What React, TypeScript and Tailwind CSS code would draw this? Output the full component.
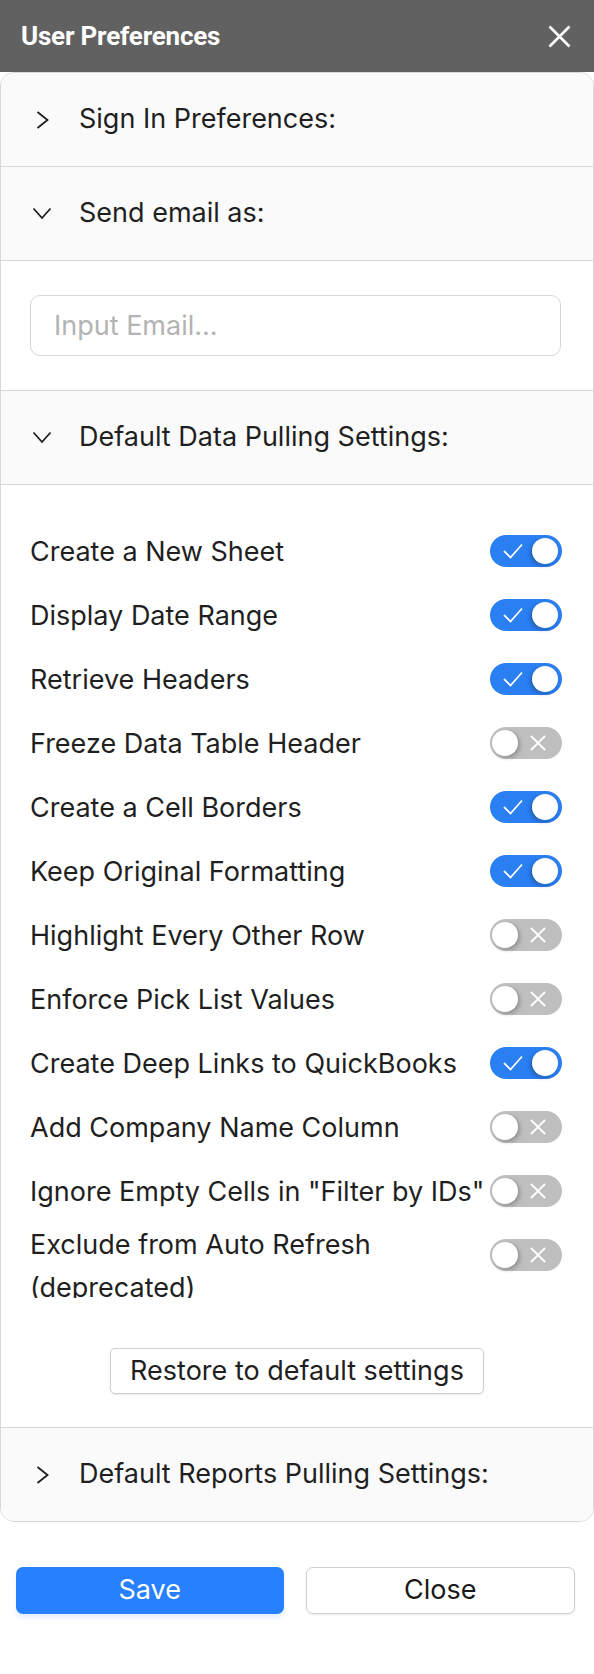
import { useState } from "react";

type Setting = {
  label: string;
  on: boolean;
  wrap?: boolean;
};

const initialSettings: Setting[] = [
  { label: "Create a New Sheet", on: true },
  { label: "Display Date Range", on: true },
  { label: "Retrieve Headers", on: true },
  { label: "Freeze Data Table Header", on: false },
  { label: "Create a Cell Borders", on: true },
  { label: "Keep Original Formatting", on: true },
  { label: "Highlight Every Other Row", on: false },
  { label: "Enforce Pick List Values", on: false },
  { label: "Create Deep Links to QuickBooks", on: true },
  { label: "Add Company Name Column", on: false },
  { label: 'Ignore Empty Cells in "Filter by IDs"', on: false },
  { label: "Exclude from Auto Refresh (deprecated)", on: false, wrap: true },
];

function Chevron({ open }: { open: boolean }) {
  return (
    <div className="flex h-5 w-5 items-center justify-center">
      {open ? (
        <svg width="20" height="13" viewBox="0 0 20 13" fill="none">
          <polyline points="1.5,1.5 10,11 18.5,1.5" stroke="#1f1f1f" strokeWidth="1.8" />
        </svg>
      ) : (
        <svg width="13" height="18" viewBox="0 0 13 18" fill="none">
          <polyline points="1.5,1 11.5,9 1.5,17" stroke="#1f1f1f" strokeWidth="1.8" />
        </svg>
      )}
    </div>
  );
}

function SectionHeader({ title, open }: { title: string; open: boolean }) {
  return (
    <div className="flex h-[93px] items-center gap-[27px] bg-[#fafafa] pl-[31px]">
      <Chevron open={open} />
      <span className="text-[27px] text-[#1f1f1f]">{title}</span>
    </div>
  );
}

function Toggle({ on, onClick }: { on: boolean; onClick: () => void }) {
  if (on) {
    return (
      <button
        onClick={onClick}
        className="flex h-8 w-[72px] shrink-0 items-center justify-between rounded-full bg-[#2a7ff3] pl-[13px] pr-[4px]"
      >
        <svg width="20" height="16" viewBox="0 0 20 16" fill="none">
          <polyline points="1,8 7.5,14.5 19,1.5" stroke="white" strokeWidth="1.8" />
        </svg>
        <span className="h-[26px] w-[26px] rounded-full bg-white shadow-[-2px_2px_4px_rgba(0,0,0,0.25)]" />
      </button>
    );
  }
  return (
    <button
      onClick={onClick}
      className="flex h-8 w-[72px] shrink-0 items-center justify-between rounded-full bg-[#bfbfbf] pl-[2px] pr-[16px]"
    >
      <span className="h-[26px] w-[26px] rounded-full bg-white shadow-[2px_2px_4px_rgba(0,0,0,0.25)]" />
      <svg width="16" height="16" viewBox="0 0 16 16" fill="none">
        <path d="M1 1L15 15M15 1L1 15" stroke="white" strokeWidth="1.8" />
      </svg>
    </button>
  );
}

export default function App() {
  const [settings, setSettings] = useState(initialSettings);
  const [email, setEmail] = useState("");

  const flip = (i: number) =>
    setSettings((s) => s.map((x, j) => (j === i ? { ...x, on: !x.on } : x)));

  return (
    <div className="min-h-screen w-full bg-white font-[Inter] text-[#1f1f1f]">
      <div className="flex h-[72px] items-center justify-between bg-[#616161] pl-[21px] pr-[23px]">
        <h1 className="font-[Roboto] text-[26px] font-bold tracking-[-0.2px] text-white">
          User Preferences
        </h1>
        <svg width="23" height="23" viewBox="0 0 23 23" fill="none">
          <path d="M1.5 1.5L21.5 21.5M21.5 1.5L1.5 21.5" stroke="white" strokeWidth="2.6" />
        </svg>
      </div>

      <div className="overflow-hidden rounded-[14px] border border-[#d8d8d8]">
        <div className="border-b border-[#d8d8d8]">
          <SectionHeader title="Sign In Preferences:" open={false} />
        </div>
        <div className="border-b border-[#d8d8d8]">
          <SectionHeader title="Send email as:" open={true} />
        </div>
        <div className="border-b border-[#d8d8d8] bg-white py-[34px] pl-[29px] pr-[32px]">
          <input
            value={email}
            onChange={(e) => setEmail(e.target.value)}
            placeholder="Input Email..."
            className="h-[61px] w-full rounded-[10px] border border-[#d6d6d6] px-[23px] text-[27px] placeholder:text-[#b3b3b3] focus:outline-none"
          />
        </div>
        <div className="border-b border-[#d8d8d8]">
          <SectionHeader title="Default Data Pulling Settings:" open={true} />
        </div>

        <div className="bg-white pb-[33px] pt-[34px]">
          <div className="h-[779px] overflow-hidden pl-[29px] pr-[31px]">
            {settings.map((s, i) =>
              s.wrap ? (
                <div key={s.label} className="flex h-16 items-start justify-between">
                  <span className="w-[420px] text-[27px] leading-[43px]">{s.label}</span>
                  <div className="self-center">
                    <Toggle on={s.on} onClick={() => flip(i)} />
                  </div>
                </div>
              ) : (
                <div key={s.label} className="flex h-16 items-center justify-between">
                  <span className="whitespace-nowrap text-[27px] leading-[43px]">{s.label}</span>
                  <Toggle on={s.on} onClick={() => flip(i)} />
                </div>
              )
            )}
          </div>
          <div className="mt-[50px] flex justify-center">
            <button className="h-[46px] w-[374px] rounded-[5px] border border-[#cfcfcf] bg-white text-[27px] shadow-[0_1px_2px_rgba(0,0,0,0.08)]">
              Restore to default settings
            </button>
          </div>
        </div>

        <div className="border-t border-[#d8d8d8]">
          <SectionHeader title="Default Reports Pulling Settings:" open={false} />
        </div>
      </div>

      <div className="flex gap-[22px] pl-4 pr-[19px] pt-[45px]">
        <button className="h-[47px] flex-1 rounded-[7px] bg-[#2680ff] text-[27px] text-white shadow-[0_4px_4px_rgba(38,128,255,0.12)]">
          Save
        </button>
        <button className="h-[47px] flex-1 rounded-[7px] border border-[#d0d0d0] bg-white text-[27px] text-[#1a1a1a] shadow-[0_1px_3px_rgba(0,0,0,0.08)]">
          Close
        </button>
      </div>
    </div>
  );
}
